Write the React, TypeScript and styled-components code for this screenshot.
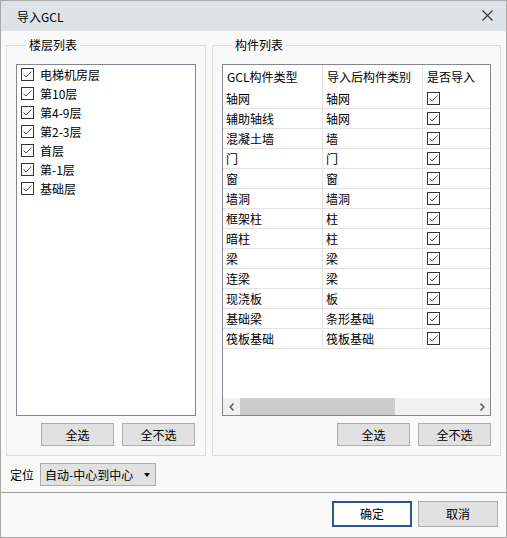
import React from "react";
import styled, { createGlobalStyle } from "styled-components";

const Global = createGlobalStyle`
  html, body { margin: 0; padding: 0; background: #ffffff; }
  body {
    font-family: "Microsoft YaHei", "Noto Sans CJK SC", "Noto Sans", sans-serif;
    font-size: 12px;
    color: #000;
  }
  * { box-sizing: border-box; }
`;

const Window = styled.div`
  width: 507px;
  height: 538px;
  border: 1px solid #a9a9a9;
  background: #f9f9f9;
  display: flex;
  flex-direction: column;
`;

const TitleBar = styled.div`
  height: 30px;
  flex: none;
  background: #dfe3e8;
  display: flex;
  align-items: center;
  justify-content: space-between;
  padding: 0 13px 0 16px;
`;

const Title = styled.div`
  font-size: 12px;
  line-height: 16px;
  color: #000;
  padding-top: 1px;
`;

const CloseIcon = styled.svg`
  width: 11px;
  height: 11px;
  display: block;
  margin-top: -1px;
`;

const Body = styled.div`
  height: 461px;
  flex: none;
  padding: 6px 5px 0 5px;
  display: flex;
  flex-direction: column;
`;

const Groups = styled.div`
  display: flex;
  gap: 6px;
  height: 419px;
`;

const Group = styled.fieldset<{ $w: number }>`
  margin: 0;
  width: ${(p) => p.$w}px;
  min-width: 0;
  height: 419px;
  border: 1px solid #dcdcdc;
  padding: 11px 9px 9px 9px;
  display: flex;
  flex-direction: column;
`;

const Legend = styled.legend`
  padding: 0 3px;
  margin-left: 10px;
  font-size: 12px;
  line-height: 16px;
  height: 16px;
`;

const ListBox = styled.div`
  width: 180px;
  height: 352px;
  border: 1px solid #828790;
  background: #fff;
  padding-top: 0;
`;

const ListItem = styled.div`
  height: 19px;
  display: flex;
  align-items: center;
  gap: 6px;
  padding-left: 4px;
  line-height: 19px;
  white-space: nowrap;
`;

const Box = styled.span`
  width: 13px;
  height: 13px;
  flex: none;
  border: 1px solid #333;
  background: #fff;
  display: inline-flex;
  align-items: center;
  justify-content: center;
`;

const ButtonRow = styled.div<{ $pr: number }>`
  margin-top: 7px;
  display: flex;
  justify-content: flex-end;
  gap: 8px;
  padding-right: ${(p) => p.$pr}px;
`;

const Button = styled.button<{ $w: number; $h: number; $primary?: boolean }>`
  width: ${(p) => p.$w}px;
  height: ${(p) => p.$h}px;
  margin: 0;
  padding: 0;
  font-family: inherit;
  font-size: 12px;
  line-height: 16px;
  color: #000;
  background: ${(p) => (p.$primary ? "#ffffff" : "#e1e1e1")};
  border: 1px solid ${(p) => (p.$primary ? "#2b5797" : "#adadad")};
  border-width: ${(p) => (p.$primary ? "2px" : "1px")};
  display: flex;
  align-items: center;
  justify-content: center;
`;

const TableBox = styled.div`
  width: 269px;
  height: 352px;
  border: 1px solid #828790;
  background: #fff;
  display: flex;
  flex-direction: column;
`;

const TableViewport = styled.div`
  flex: 1;
  overflow: hidden;
`;

const Grid = styled.div`
  display: grid;
  grid-template-columns: 100px 100px 205px;
  width: 405px;
`;

const HeadCell = styled.div`
  height: 24px;
  line-height: 24px;
  padding-left: 4px;
  border-right: 1px solid #e3e3e3;
  white-space: nowrap;
`;

const Cell = styled.div`
  height: 20px;
  line-height: 19px;
  padding-left: 3px;
  border-right: 1px solid #e3e3e3;
  border-bottom: 1px solid #e3e3e3;
  white-space: nowrap;
  display: flex;
  align-items: center;
`;

const CheckCell = styled(Cell)`
  padding-left: 4px;
`;

const ScrollBar = styled.div`
  height: 17px;
  flex: none;
  background: #f0f0f0;
  display: flex;
  align-items: stretch;
`;

const ScrollArrow = styled.div`
  width: 17px;
  flex: none;
  display: flex;
  align-items: center;
  justify-content: center;
`;

const ScrollTrack = styled.div`
  flex: 1;
  display: flex;
  align-items: stretch;
`;

const ScrollThumb = styled.div`
  background: #cdcdcd;
`;

const LocRow = styled.div`
  margin-top: 7px;
  height: 23px;
  display: flex;
  align-items: center;
  gap: 6px;
  padding-left: 4px;
`;

const Label = styled.span`
  line-height: 16px;
`;

const Select = styled.div`
  width: 116px;
  height: 23px;
  background: #e1e1e1;
  border: 1px solid #adadad;
  display: flex;
  align-items: center;
  justify-content: space-between;
  padding: 0 5px 0 4px;
  line-height: 16px;
`;

const Caret = styled.span`
  width: 0;
  height: 0;
  border-left: 3.5px solid transparent;
  border-right: 3.5px solid transparent;
  border-top: 4px solid #000;
`;

const Footer = styled.div`
  height: 45px;
  flex: none;
  border-top: 1px solid #a0a0a0;
  padding: 8px 8px 0 0;
  display: flex;
  justify-content: flex-end;
  gap: 6px;
`;

const Check: React.FC = () => (
  <Box>
    <svg width="11" height="11" viewBox="0 0 11 11">
      <polyline points="1.5,5.5 4,8 9.5,2.5" fill="none" stroke="#555" strokeWidth="1" />
    </svg>
  </Box>
);

const floors = ["电梯机房层", "第10层", "第4-9层", "第2-3层", "首层", "第-1层", "基础层"];

const rows: [string, string][] = [
  ["轴网", "轴网"],
  ["辅助轴线", "轴网"],
  ["混凝土墙", "墙"],
  ["门", "门"],
  ["窗", "窗"],
  ["墙洞", "墙洞"],
  ["框架柱", "柱"],
  ["暗柱", "柱"],
  ["梁", "梁"],
  ["连梁", "梁"],
  ["现浇板", "板"],
  ["基础梁", "条形基础"],
  ["筏板基础", "筏板基础"],
];

export default function App() {
  return (
    <>
      <Global />
      <Window>
        <TitleBar>
          <Title>导入GCL</Title>
          <CloseIcon viewBox="0 0 11 11">
            <path d="M0.5 0.5 L10.5 10.5 M10.5 0.5 L0.5 10.5" stroke="#333" strokeWidth="1.1" fill="none" />
          </CloseIcon>
        </TitleBar>
        <Body>
          <Groups>
            <Group $w={200}>
              <Legend>楼层列表</Legend>
              <ListBox>
                {floors.map((f) => (
                  <ListItem key={f}>
                    <Check />
                    <span>{f}</span>
                  </ListItem>
                ))}
              </ListBox>
              <ButtonRow $pr={1}>
                <Button $w={73} $h={23}>全选</Button>
                <Button $w={73} $h={23}>全不选</Button>
              </ButtonRow>
            </Group>
            <Group $w={289}>
              <Legend>构件列表</Legend>
              <TableBox>
                <TableViewport>
                  <Grid>
                    <HeadCell>GCL构件类型</HeadCell>
                    <HeadCell>导入后构件类别</HeadCell>
                    <HeadCell>是否导入</HeadCell>
                    {rows.map(([a, b], i) => (
                      <React.Fragment key={i}>
                        <Cell>{a}</Cell>
                        <Cell>{b}</Cell>
                        <CheckCell>
                          <Check />
                        </CheckCell>
                      </React.Fragment>
                    ))}
                  </Grid>
                </TableViewport>
                <ScrollBar>
                  <ScrollArrow>
                    <svg width="6" height="8" viewBox="0 0 6 8">
                      <path d="M4.5 0.5 L1.2 4 L4.5 7.5" stroke="#606060" strokeWidth="1.6" fill="none" />
                    </svg>
                  </ScrollArrow>
                  <ScrollTrack>
                    <ScrollThumb style={{ width: "155px" }} />
                  </ScrollTrack>
                  <ScrollArrow>
                    <svg width="6" height="8" viewBox="0 0 6 8">
                      <path d="M1.5 0.5 L4.8 4 L1.5 7.5" stroke="#606060" strokeWidth="1.6" fill="none" />
                    </svg>
                  </ScrollArrow>
                </ScrollBar>
              </TableBox>
              <ButtonRow $pr={0}>
                <Button $w={73} $h={23}>全选</Button>
                <Button $w={73} $h={23}>全不选</Button>
              </ButtonRow>
            </Group>
          </Groups>
          <LocRow>
            <Label>定位</Label>
            <Select>
              <span>自动-中心到中心</span>
              <Caret />
            </Select>
          </LocRow>
        </Body>
        <Footer>
          <Button $w={80} $h={26} $primary>确定</Button>
          <Button $w={80} $h={26}>取消</Button>
        </Footer>
      </Window>
    </>
  );
}
